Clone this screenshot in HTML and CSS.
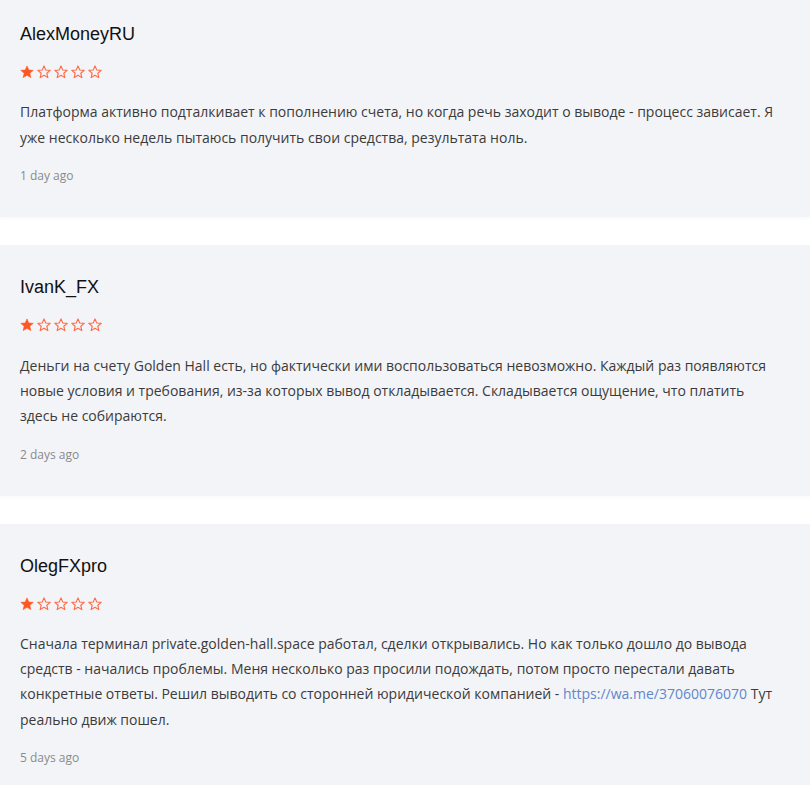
FILE: index.html
```html
<!DOCTYPE html>
<html lang="ru">
<head>
<meta charset="utf-8">
<title>Reviews</title>
<link rel="stylesheet" href="styles.css">
</head>
<body>
<svg width="0" height="0" class="defs" aria-hidden="true">
  <defs>
    <path id="star" d="M7 0.9 L8.75 5 L13.2 5.35 L9.8 8.25 L10.85 12.6 L7 10.3 L3.15 12.6 L4.2 8.25 L0.8 5.35 L5.25 5 Z"/>
  </defs>
</svg>
<div class="list">
  <article class="card">
    <h3 class="name">AlexMoneyRU</h3>
    <div class="stars">
      <svg class="star" viewBox="0 0 14 14"><use href="#star" class="full"/></svg>
      <svg class="star" viewBox="0 0 14 14"><use href="#star" class="empty"/></svg>
      <svg class="star" viewBox="0 0 14 14"><use href="#star" class="empty"/></svg>
      <svg class="star" viewBox="0 0 14 14"><use href="#star" class="empty"/></svg>
      <svg class="star" viewBox="0 0 14 14"><use href="#star" class="empty"/></svg>
    </div>
    <p class="text">Платформа активно подталкивает к пополнению счета, но когда речь заходит о выводе - процесс зависает. Я уже несколько недель пытаюсь получить свои средства, результата ноль.</p>
    <div class="date">1 day ago</div>
  </article>
  <article class="card">
    <h3 class="name">IvanK_FX</h3>
    <div class="stars">
      <svg class="star" viewBox="0 0 14 14"><use href="#star" class="full"/></svg>
      <svg class="star" viewBox="0 0 14 14"><use href="#star" class="empty"/></svg>
      <svg class="star" viewBox="0 0 14 14"><use href="#star" class="empty"/></svg>
      <svg class="star" viewBox="0 0 14 14"><use href="#star" class="empty"/></svg>
      <svg class="star" viewBox="0 0 14 14"><use href="#star" class="empty"/></svg>
    </div>
    <p class="text">Деньги на счету Golden Hall есть, но фактически ими воспользоваться невозможно. Каждый раз появляются новые условия и требования, из-за которых вывод откладывается. Складывается ощущение, что платить здесь не собираются.</p>
    <div class="date">2 days ago</div>
  </article>
  <article class="card">
    <h3 class="name">OlegFXpro</h3>
    <div class="stars">
      <svg class="star" viewBox="0 0 14 14"><use href="#star" class="full"/></svg>
      <svg class="star" viewBox="0 0 14 14"><use href="#star" class="empty"/></svg>
      <svg class="star" viewBox="0 0 14 14"><use href="#star" class="empty"/></svg>
      <svg class="star" viewBox="0 0 14 14"><use href="#star" class="empty"/></svg>
      <svg class="star" viewBox="0 0 14 14"><use href="#star" class="empty"/></svg>
    </div>
    <p class="text">Сначала терминал private.golden-hall.space работал, сделки открывались. Но как только дошло до вывода средств - начались проблемы. Меня несколько раз просили подождать, потом просто перестали давать конкретные ответы. Решил выводить со сторонней юридической компанией - <a class="link" href="#">https://wa.me/37060076070</a> Тут реально движ пошел.</p>
    <div class="date">5 days ago</div>
  </article>
</div>
</body>
</html>
```

FILE: styles.css
```css
html, body {
  margin: 0;
  padding: 0;
  background: #ffffff;
  overflow: hidden;
}

.defs {
  position: absolute;
  width: 0;
  height: 0;
}

.list {
  display: flex;
  flex-direction: column;
  gap: 28px;
  margin-top: -8px;
}

.card {
  background: #f3f4f8;
  padding: 31px 30px 33px 20px;
  box-shadow: 0 2px 3px rgba(0, 0, 0, 0.025);
}

.name {
  margin: 0;
  font-family: "Liberation Sans", Arial, sans-serif;
  font-weight: 400;
  font-size: 18px;
  line-height: 22px;
  color: #111111;
}

.stars {
  display: flex;
  gap: 3px;
  margin-top: 20px;
  height: 14px;
}

.star {
  width: 14px;
  height: 14px;
  display: block;
  overflow: visible;
}

.full {
  fill: #ff5722;
  stroke: #ff5722;
  stroke-width: 0.6;
  stroke-linejoin: round;
}

.empty {
  fill: none;
  stroke: #ff6a45;
  stroke-width: 1.1;
  stroke-linejoin: round;
}

.text {
  margin: 20.4px 0 0 0;
  font-family: "Open Sans", sans-serif;
  font-size: 14px;
  line-height: 25.2px;
  color: #3b3b3b;
}

.link {
  color: #6286cc;
  text-decoration: none;
}

.date {
  margin-top: 18.4px;
  font-family: "Open Sans", sans-serif;
  font-size: 12px;
  line-height: 16px;
  color: #8a8a8a;
}
```
